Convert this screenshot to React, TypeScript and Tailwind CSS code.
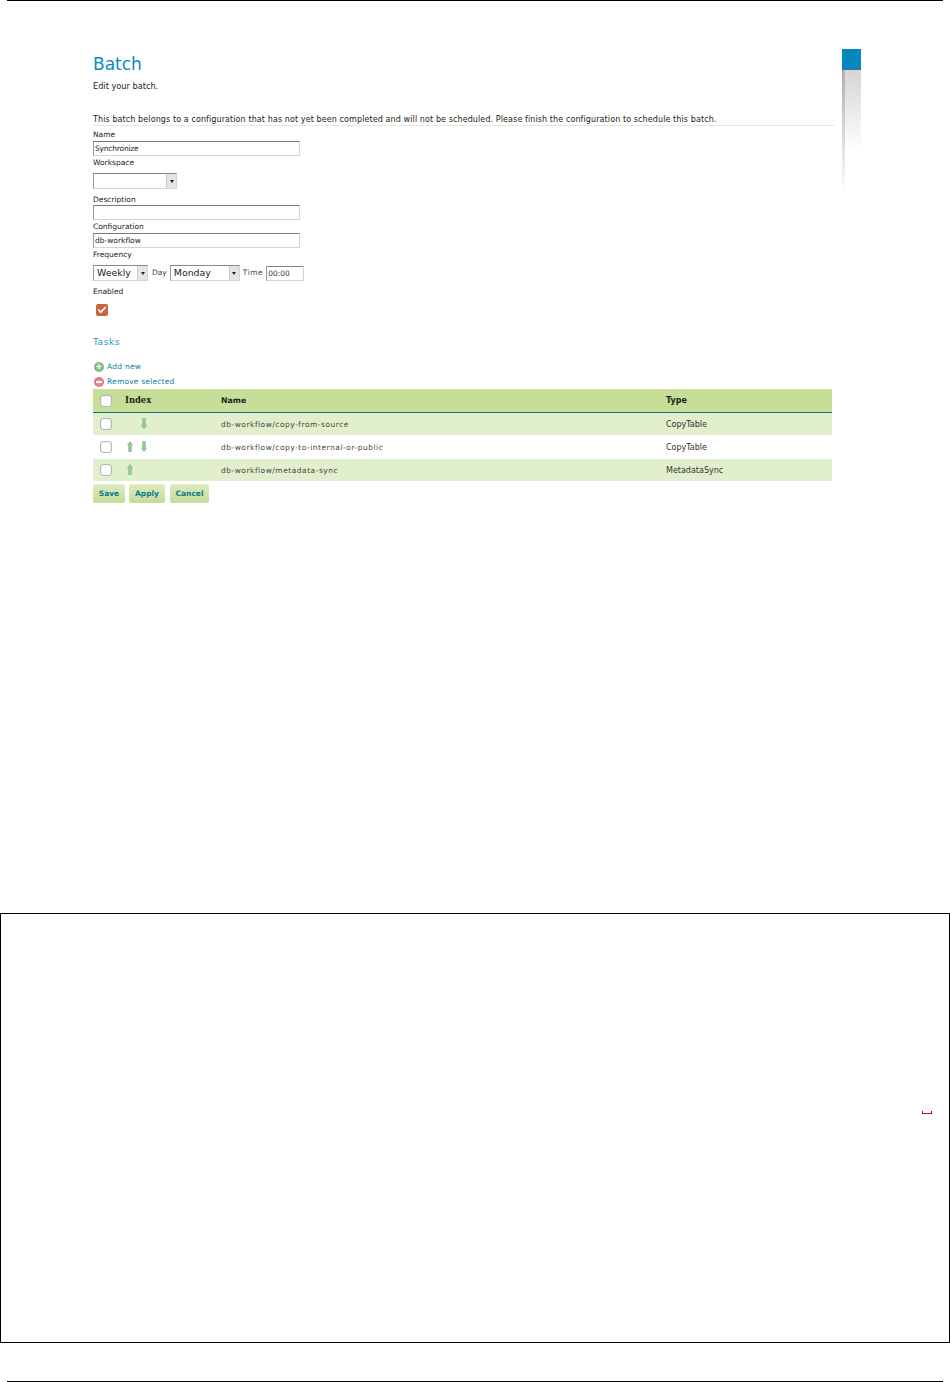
import { Check } from "lucide-react";

const font = "font-['DejaVu_Sans',sans-serif]";

function Label({ children, className = "" }: { children: string; className?: string }) {
  return <div className={`text-[7.5px] leading-[10px] text-[#222] ${className}`}>{children}</div>;
}

function TextBox({ value = "", tight }: { value?: string; tight?: boolean }) {
  return (
    <div className={`h-[15px] w-[207px] border border-[#d4d4d4] border-t-[#777] border-l-[#999] bg-white pl-[1px] text-[7.5px] leading-[13px] text-[#222] ${tight ? "tracking-[-0.2px]" : ""}`}>
      {value}
    </div>
  );
}

function Select({ value, width }: { value: string; width: string }) {
  return (
    <div className={`flex h-[16px] ${width} items-center justify-between border border-[#d4d4d4] border-t-[#888] border-l-[#999] bg-white`}>
      <span className="pl-[3px] text-[9.4px] leading-none text-[#222]">{value}</span>
      <span className="flex h-[14px] w-[10px] items-center justify-center border-l border-[#ccc] bg-[#e4e4e4]">
        <span className="h-0 w-0 border-x-[2px] border-t-[3px] border-x-transparent border-t-[#222]" />
      </span>
    </div>
  );
}

function RowCheck() {
  return <span className="block h-[12px] w-[12px] rounded-[3px] border border-[#b4b4b4] bg-white shadow-[inset_0_0_1px_#bbb]" />;
}

function ArrowUp() {
  return (
    <svg width="6" height="11" viewBox="0 0 6 11">
      <path d="M3 0.5 L5.5 4 H4.3 V10.5 H1.7 V4 H0.5 Z" fill="#9fd09a" stroke="#5a9c62" strokeWidth="0.5" />
    </svg>
  );
}

function ArrowDown() {
  return (
    <svg width="6" height="11" viewBox="0 0 6 11">
      <path d="M1.7 0.5 H4.3 V7 H5.5 L3 10.5 L0.5 7 H1.7 Z" fill="#9fd09a" stroke="#5a9c62" strokeWidth="0.5" />
    </svg>
  );
}

function TaskRow({ name, type, up, down, shaded }: { name: string; type: string; up?: boolean; down?: boolean; shaded?: boolean }) {
  return (
    <div className={`flex h-[22px] items-center text-[7.5px] text-[#444] ${shaded ? "bg-[#e2efcc]" : "bg-white"}`}>
      <div className="w-[32px] pl-[7px]"><RowCheck /></div>
      <div className="flex w-[96px] gap-[8px] pb-[2px] pl-[2px]">
        <span className="w-[6px]">{up ? <ArrowUp /> : null}</span>
        <span className="w-[6px]">{down ? <ArrowDown /> : null}</span>
      </div>
      <div className="w-[445px] pt-[1px] tracking-[0.5px]">{name}</div>
      <div className="pt-[1px] text-[8px] text-[#333]">{type}</div>
    </div>
  );
}

function ActionButton({ label, width }: { label: string; width: string }) {
  return (
    <div className={`flex h-[19px] ${width} items-center justify-center rounded-[2px] border-t border-[#e4efcc] bg-gradient-to-b from-[#dbeabd] to-[#c4dc9a] text-[7.5px] font-bold text-[#0a7a8f]`}>
      {label}
    </div>
  );
}

export default function App() {
  return (
    <div className={`flex h-[1382px] w-[950px] flex-col overflow-hidden bg-white ${font}`}>
      <div className="mx-[7px] h-0 border-t border-black" />

      <div className="flex h-[912px] pt-[48px]">
        <div className="ml-[93px] w-[741px]">
          <h1 className="pt-[4px] text-[17px] leading-[22px] text-[#0b8cc0]">Batch</h1>
          <p className="mt-[5px] text-[8.2px] leading-[12px] text-[#222]">Edit your batch.</p>

          <p className="mt-[22px] h-[12px] border-b border-[#e4ebcf] text-[8px] leading-[12px] tracking-[0.1px] text-[#222]">
            This batch belongs to a configuration that has not yet been completed and will not be scheduled. Please finish the configuration to schedule this batch.
          </p>

          <Label className="mt-[4px]">Name</Label>
          <div className="mt-[1px]"><TextBox tight value="Synchronize" /></div>
          <Label className="mt-[2px]">Workspace</Label>
          <div className="mt-[5px]"><Select value="" width="w-[84px]" /></div>
          <Label className="mt-[6px]">Description</Label>
          <div><TextBox /></div>
          <Label className="mt-[2px]">Configuration</Label>
          <div className="mt-[1px]"><TextBox value="db-workflow" /></div>
          <Label className="mt-[2px]">Frequency</Label>
          <div className="mt-[5px] flex items-center">
            <Select value="Weekly" width="w-[55px]" />
            <span className="ml-[4px] text-[7.5px] text-[#444]">Day</span>
            <span className="ml-[3px]"><Select value="Monday" width="w-[70px]" /></span>
            <span className="ml-[3px] text-[7.5px] tracking-[0.5px] text-[#444]">Time</span>
            <span className="ml-[3px] block h-[15px] w-[38px] border border-[#d4d4d4] border-t-[#888] border-l-[#999] pl-[1px] text-[7.5px] leading-[13px] text-[#333]">00:00</span>
          </div>
          <Label className="mt-[6px]">Enabled</Label>
          <div className="ml-[3px] mt-[7px] flex h-[12px] w-[12px] items-center justify-center rounded-[2px] bg-[#c8653a]">
            <Check size={10} color="white" strokeWidth={4} />
          </div>

          <h2 className="mt-[20px] text-[9px] leading-[12px] tracking-[0.6px] text-[#1d9ac8]">Tasks</h2>

          <div className="ml-[1px] mt-[11px] flex h-[15px] items-center gap-[3px] text-[7.5px] tracking-[0.25px] text-[#0a7c9e]">
            <span className="flex h-[10px] w-[10px] items-center justify-center rounded-full bg-[radial-gradient(circle,#a4d4a0,#63a868)] text-[8px] leading-none font-bold text-white">+</span>
            Add new
          </div>
          <div className="ml-[1px] flex h-[15px] items-center gap-[3px] text-[7.5px] tracking-[0.2px] text-[#0a7c9e]">
            <span className="flex h-[10px] w-[10px] items-center justify-center rounded-full bg-[radial-gradient(circle,#f0a0a0,#d85f5f)]">
              <span className="h-[2px] w-[6px] bg-white" />
            </span>
            Remove selected
          </div>

          <div className="w-[739px]">
            <div className="flex h-[24px] items-center border-b border-[#14707f] bg-[#c7de98] text-[7.5px] font-bold text-[#222]">
              <div className="w-[32px] pl-[7px]"><RowCheck /></div>
              <div className="w-[96px] font-['DejaVu_Serif',serif] text-[8.4px]">Index</div>
              <div className="w-[445px] text-[7.8px]">Name</div>
              <div className="text-[8px]">Type</div>
            </div>
            <div className="flex flex-col gap-[1px]">
              <TaskRow shaded down name="db-workflow/copy-from-source" type="CopyTable" />
              <TaskRow up down name="db-workflow/copy-to-internal-or-public" type="CopyTable" />
              <TaskRow shaded up name="db-workflow/metadata-sync" type="MetadataSync" />
            </div>
          </div>

          <div className="mt-[3px] flex">
            <ActionButton label="Save" width="w-[32px]" />
            <div className="ml-[4px]"><ActionButton label="Apply" width="w-[36px]" /></div>
            <div className="ml-[5px]"><ActionButton label="Cancel" width="w-[39px]" /></div>
          </div>
        </div>

        <div className="ml-[8px] h-[145px] w-[19px]">
          <div className="h-[21px] border-b-2 border-[#2a7ba3] bg-[#0787c0]" />
          <div className="flex">
            <div className="h-[124px] w-[3px] bg-gradient-to-b from-[#b0b0b0] to-white" />
            <div className="h-[80px] flex-1 bg-gradient-to-b from-[#d5d5d5] to-white" />
          </div>
        </div>
      </div>

      <div className="relative h-[430px] border border-black bg-white">
        <div className="absolute left-[921px] top-[197px] h-[3px] w-[10px] border-x border-b border-[#e00000]" />
      </div>

      <div className="mx-[7px] mt-[38px] h-0 border-t border-black" />
    </div>
  );
}
